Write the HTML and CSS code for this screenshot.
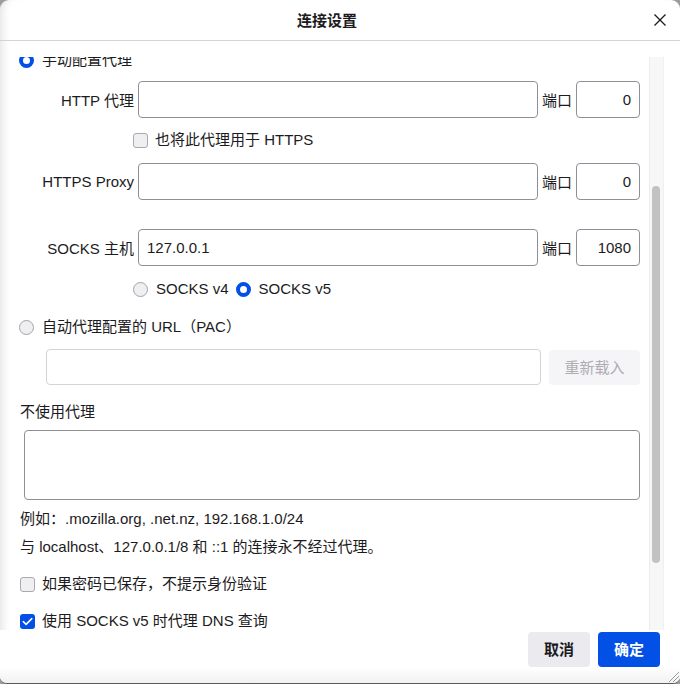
FILE: index.html
```html
<!DOCTYPE html>
<html lang="zh-CN">
<head>
<meta charset="utf-8">
<title>连接设置</title>
<link rel="stylesheet" href="styles.css">
</head>
<body>
<div class="dialog">
  <div class="header">
    <div class="title">连接设置</div>
    <svg class="close" width="12" height="12" viewBox="0 0 12 12"><path d="M0.5 0.5 L11.5 11.5 M11.5 0.5 L0.5 11.5" stroke="#1c1b22" stroke-width="1.3" fill="none"/></svg>
  </div>
  <div class="main">
    <div class="scroll">
      <div class="content">
        <div class="row radio-row first">
          <span class="radio checked"></span><span>手动配置代理</span>
        </div>
        <div class="proxy-grid r-http">
          <span class="lbl">HTTP 代理</span>
          <div class="input"></div>
          <span class="port-lbl">端口</span>
          <div class="input port">0</div>
        </div>
        <div class="row indent r-cb">
          <span class="checkbox"></span><span>也将此代理用于 HTTPS</span>
        </div>
        <div class="proxy-grid r-https">
          <span class="lbl">HTTPS Proxy</span>
          <div class="input"></div>
          <span class="port-lbl">端口</span>
          <div class="input port">0</div>
        </div>
        <div class="proxy-grid r-socks">
          <span class="lbl">SOCKS 主机</span>
          <div class="input">127.0.0.1</div>
          <span class="port-lbl">端口</span>
          <div class="input port">1080</div>
        </div>
        <div class="row indent r-ver">
          <span class="radio"></span><span>SOCKS v4</span>
          <span class="radio checked v5"></span><span>SOCKS v5</span>
        </div>
        <div class="row radio-row r-pac">
          <span class="radio"></span><span>自动代理配置的 URL（PAC）</span>
        </div>
        <div class="pac">
          <div class="input disabled"></div>
          <div class="reload">重新载入</div>
        </div>
        <div class="row r-noproxy">不使用代理</div>
        <div class="textarea"></div>
        <div class="row note r-note1">例如：.mozilla.org, .net.nz, 192.168.1.0/24</div>
        <div class="row note r-note2">与 localhost、127.0.0.1/8 和 ::1 的连接永不经过代理。</div>
        <div class="row cb-row r-cb1">
          <span class="checkbox"></span><span>如果密码已保存，不提示身份验证</span>
        </div>
        <div class="row cb-row r-cb2">
          <span class="checkbox checked"><svg width="15" height="15" viewBox="0 0 15 15"><path d="M3.3 7.6 L6.1 10.4 L11.8 4.6" stroke="#fff" stroke-width="1.5" fill="none" stroke-linecap="round" stroke-linejoin="round"/></svg></span><span>使用 SOCKS v5 时代理 DNS 查询</span>
        </div>
      </div>
    </div>
    <div class="scrollbar"><div class="thumb"></div></div>
  </div>
  <div class="footer">
    <div class="btn cancel">取消</div>
    <div class="btn ok">确定</div>
  </div>
  <svg class="grip" width="14" height="14" viewBox="0 0 14 14"><path d="M13 3 L3 13 M13 7 L7 13 M13 11 L11 13" stroke="#9a9a9a" stroke-width="1" fill="none"/></svg>
</div>
</body>
</html>
```

FILE: styles.css
```css
html, body {
  margin: 0;
  padding: 0;
  background: #9c9c9c;
}
body {
  width: 680px;
  height: 684px;
  overflow: hidden;
  font-family: "Liberation Sans", "Noto Sans CJK SC", sans-serif;
  font-size: 15px;
  color: #1c1b22;
}
.dialog {
  position: relative;
  width: 680px;
  height: 684px;
  box-sizing: border-box;
  background: #fff;
  border-radius: 9px 9px 7px 7px;
  border-bottom: 1px solid #5a5a5a;
  display: flex;
  flex-direction: column;
  overflow: hidden;
  box-shadow: inset 9px 0 10px -7px rgba(0, 0, 0, 0.12);
}
.header {
  height: 40px;
  flex: none;
  border-bottom: 1px solid #d4d4d4;
  display: grid;
  grid-template-columns: 1fr auto;
  align-items: center;
  padding-right: 14px;
}
.title {
  text-align: center;
  font-weight: bold;
  font-size: 15px;
  line-height: 20px;
  padding-top: 1px;
}
.close {
  display: block;
}
.main {
  flex: none;
  height: 589px;
  padding-top: 16px;
  box-sizing: border-box;
  display: flex;
}
.scroll {
  width: 649px;
  height: 573px;
  overflow: hidden;
}
.content {
  margin-top: -7px;
  padding-left: 19px;
  padding-right: 9px;
}
.row {
  display: flex;
  align-items: center;
  height: 20px;
  line-height: 20px;
  white-space: nowrap;
}
.radio {
  width: 15px;
  height: 15px;
  box-sizing: border-box;
  border-radius: 50%;
  border: 1px solid #a3a3a8;
  background: #efeff2;
  flex: none;
  margin-right: 8px;
}
.radio.checked {
  border: 4px solid #0250e6;
  background: #fff;
}
.radio.v5 {
  margin-left: 7px;
}
.checkbox {
  width: 15px;
  height: 15px;
  box-sizing: border-box;
  border-radius: 3px;
  border: 1px solid #a9a9ae;
  background: #efeff2;
  flex: none;
  margin-right: 7px;
  display: flex;
}
.checkbox.checked {
  border: none;
  background: #0250e6;
}
.proxy-grid {
  display: grid;
  grid-template-columns: 115px 400px 30px 64px;
  column-gap: 4px;
  align-items: center;
  height: 37px;
}
.lbl {
  text-align: right;
  white-space: nowrap;
}
.port-lbl {
  white-space: nowrap;
}
.input {
  height: 37px;
  box-sizing: border-box;
  border: 1px solid #8f8f97;
  border-radius: 4px;
  background: #fff;
  padding: 0 8px;
  line-height: 35px;
  white-space: nowrap;
}
.input.port {
  text-align: right;
}
.input.disabled {
  border-color: #d3d3d8;
  height: 36px;
  flex: none;
  width: 495px;
}
.indent {
  padding-left: 114px;
}
.r-http { margin-top: 11px; }
.r-cb { margin-top: 12px; }
.r-https { margin-top: 13px; }
.r-socks { margin-top: 29px; }
.r-ver { margin-top: 13px; }
.r-pac { margin-top: 18px; }
.pac {
  margin-top: 12px;
  padding-left: 27px;
  display: flex;
  gap: 8px;
  align-items: flex-start;
}
.reload {
  width: 91px;
  height: 35px;
  margin-top: 1px;
  border-radius: 4px;
  background: #f5f5f7;
  color: #adadb3;
  text-align: center;
  line-height: 35px;
}
.r-noproxy {
  margin-top: 17px;
  padding-left: 1px;
}
.textarea {
  margin-top: 8px;
  margin-left: 5px;
  width: 616px;
  height: 70px;
  box-sizing: border-box;
  border: 1px solid #8f8f97;
  border-radius: 4px;
}
.note { padding-left: 1px; }
.r-note1 { margin-top: 9px; }
.r-note2 { margin-top: 8px; }
.cb-row { padding-left: 1px; }
.r-cb1 { margin-top: 17px; }
.r-cb2 { margin-top: 17px; }
.scrollbar {
  width: 15px;
  height: 573px;
  box-sizing: border-box;
  background: #f7f7f7;
  border-left: 1px solid #ececec;
  border-right: 1px solid #f0f0f0;
  padding-top: 129px;
}
.thumb {
  width: 8px;
  height: 377px;
  margin-left: 2px;
  border-radius: 4px;
  background: #c2c2c2;
}
.footer {
  flex: 1;
  display: flex;
  justify-content: flex-end;
  align-items: flex-start;
  gap: 8px;
  padding: 2px 20px 0 0;
  background: linear-gradient(to bottom, #fff 0, #fff 37px, #f1f1f1 100%);
}
.btn {
  width: 62px;
  height: 35px;
  border-radius: 4px;
  text-align: center;
  line-height: 35px;
  font-weight: bold;
}
.cancel {
  background: #ebebef;
  color: #1c1b22;
}
.ok {
  background: #0250e6;
  color: #fff;
}
.grip {
  position: absolute;
  right: 0;
  bottom: 0;
}
```
